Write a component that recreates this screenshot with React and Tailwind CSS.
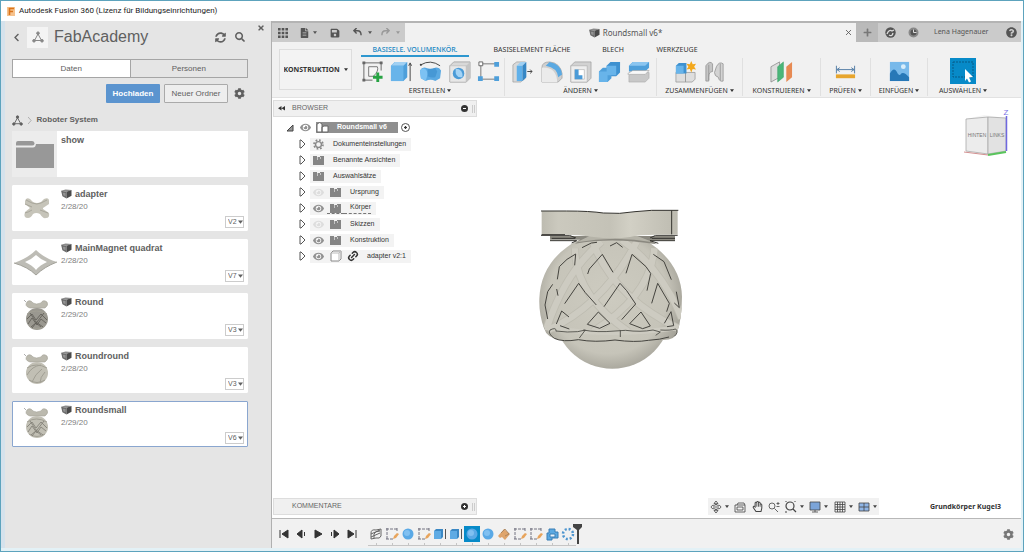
import {
  FaChevronLeft,
  FaCog,
  FaEye,
  FaFileAlt,
  FaPlus,
  FaQuestionCircle,
  FaRegHandPaper,
  FaSave,
  FaSearch,
  FaSyncAlt,
  FaTimes,
} from "react-icons/fa";
import { Link2 } from "lucide-react";

const files = [
  { name: "adapter", date: "2/28/20", version: "V2", thumb: "cross" },
  { name: "MainMagnet quadrat", date: "2/28/20", version: "V7", thumb: "diamond" },
  { name: "Round", date: "2/29/20", version: "V3", thumb: "dark" },
  { name: "Roundround", date: "2/28/20", version: "V3", thumb: "plain" },
  { name: "Roundsmall", date: "2/29/20", version: "V6", thumb: "lattice", active: true },
];

const treeRows = [
  { label: "Dokumenteinstellungen", icons: ["gear"] },
  { label: "Benannte Ansichten", icons: ["folder"] },
  { label: "Auswahlsätze", icons: ["folder"] },
  { label: "Ursprung", icons: ["hidden", "folder"] },
  { label: "Körper", icons: ["eye", "folder"], marked: true },
  { label: "Skizzen", icons: ["hidden", "folder"] },
  { label: "Konstruktion", icons: ["eye", "folder"] },
  { label: "adapter v2:1", icons: ["eye", "part", "link"] },
];

const ribbonTabs = [
  { label: "BASISELE. VOLUMENKÖR.", width: "w-[108px]", active: true },
  { label: "BASISELEMENT FLÄCHE", width: "w-[110px]" },
  { label: "BLECH", width: "w-[36px]" },
  { label: "WERKZEUGE", width: "w-[76px]" },
];

const ribbonGroups = [
  { label: "ERSTELLEN", width: "w-[149px]", icons: ["sketch", "extrude", "revolve", "hole", "pattern"] },
  { label: "ÄNDERN", width: "w-[152px]", icons: ["press", "fillet", "shell", "combine", "split"] },
  { label: "ZUSAMMENFÜGEN", width: "w-[86px]", icons: ["component", "joint"] },
  { label: "KONSTRUIEREN", width: "w-[78px]", icons: ["plane"] },
  { label: "PRÜFEN", width: "w-[50px]", icons: ["measure"] },
  { label: "EINFÜGEN", width: "w-[57px]", icons: ["image"] },
  { label: "AUSWÄHLEN", width: "w-[70px]", icons: ["select"] },
];

const timeline = [
  "coil", "sketch", "sphere", "sketch", "box", "box", "sphereOn",
  "sphere", "plane", "sketch", "sketch", "combine", "pattern",
];

function Caret({ className = "w-[5px]" }) {
  return (
    <svg viewBox="0 0 6 5" className={`${className} shrink-0`} fill="currentColor" aria-hidden="true">
      <path d="M0 .5h6L3 4.5z" />
    </svg>
  );
}

function NetworkIcon({ className }) {
  return (
    <svg viewBox="0 0 12 12" className={className} fill="currentColor" stroke="currentColor" aria-hidden="true">
      <path d="M6 3 2.5 9.5h7z" fill="none" strokeWidth="1" />
      <circle cx="6" cy="2.2" r="1.3" />
      <circle cx="2" cy="9.8" r="1.3" />
      <circle cx="10" cy="9.8" r="1.3" />
    </svg>
  );
}

function CubeIcon({ className = "h-[10px] w-[11px]" }) {
  return (
    <svg viewBox="0 0 12 11" className={`${className} shrink-0`} aria-hidden="true">
      <path d="M0 2 5 .5 11.5 1 6 3z" fill="#8a8a8a" />
      <path d="M0 2 6 3v7.5L1.5 8z" fill="#6c6c6c" />
      <path d="M2 4 5 4.5v3.500L2.500 7z" fill="#949494" />
      <path d="M6 3 11.500 1v6.500L6 10.500z" fill="#4a4a4a" />
    </svg>
  );
}

function FolderIcon({ className }) {
  return (
    <svg viewBox="0 0 38 28" className={className} fill="currentColor" aria-hidden="true">
      <path d="M0 3q0-2 2-2h14q2 0 2.500 2v1q-.5 1.500-2.500 1.500H0zM0 7.500h17q2.500 0 3-3.500h18v24H0z" />
    </svg>
  );
}

function Thumb({ kind }) {
  if (kind === "cross") {
    return (
      <svg viewBox="0 0 44 34" className="w-[44px]" aria-hidden="true">
        <path
          d="M11 10q1-4 5-2l3 3q4 2 8 0l3-3q5-2 5 2v3l-6 4v1l6 4q1 5-3 5-3 1-6-4-4-2-7 0-2 4-5 4-5 0-3-6l5-4-5-4z"
          fill="#c6c4b9"
        />
        <path d="M11 22q4-1 7-3m8 0 8 3M11 13l7 3M12 9l6 3q5 2 9 0l6-3" stroke="#a9a79c" fill="none" />
      </svg>
    );
  }
  if (kind === "diamond") {
    return (
      <svg viewBox="0 0 44 34" className="w-[44px]" aria-hidden="true">
        <path d="M0 18Q14 13 22 5q8 8 21 12-13 5-21 13Q14 22 0 18z" fill="#bdbcb5" />
        <path d="M11 17q7-3 11-7 4 4 11 7-7 3-11 8-4-5-11-8z" fill="#fff" />
        <path d="M0 18q14 4 22 12 8-8 21-13" stroke="#a3a29a" fill="none" />
      </svg>
    );
  }
  return (
    <svg viewBox="0 0 44 34" className="w-[44px]" aria-hidden="true">
      <path d="M13 3q3-3 6 1 3 2 8 0 2-4 6-1 2 3-2 6H16q-6-2-3-6z" fill="#bbb9ae" stroke="#a19f94" strokeWidth=".6" />
      <circle cx="23" cy="20" r="11" fill={kind === "dark" ? "#9a9890" : "#c1bfb4"} />
      <path d="M13 15q9-6 20 0M15 27q8 5 16 0" stroke="#a19f94" fill="none" />
      {kind === "plain" ? (
        <path d="M13 22q5-9 14-10M18 29q3-8 10-13M26 30q0-6 5-11" stroke="#a19f94" fill="none" />
      ) : (
        <path
          d="m13 20 5-5 4 6 5-6 6 6M14 25l4-6 5 7 4-6 5 4M18 29l4-5 5 4M16 14l6 9 7 5M30 14l-7 9-6 5"
          stroke={kind === "dark" ? "#5d5b54" : "#7d7b72"}
          strokeWidth=".8"
          fill="none"
        />
      )}
      <path d="m10 1 2 2" stroke="#999" strokeWidth=".8" />
    </svg>
  );
}

const ribbonArt = {
  sketch: (
    <>
      <path d="M2 3h20M3 2v20M2 21h10M21 2v9" stroke="#666" fill="none" />
      <path d="M1.500 1.500h3v3h-3zM19.500 1.500h3v3h-3zM1.500 19.500h3v3h-3z" fill="#666" />
      <path d="M8 7v10h5q6-6 4-10z" fill="#f6f6f6" stroke="#777" />
      <path d="M17.500 13v10M12.500 18h10" stroke="#27a343" strokeWidth="3" />
    </>
  ),
  extrude: (
    <>
      <path d="M1 6 5 2h13v16l-4 4H1z" fill="#4e9fda" />
      <path d="M1 6 5 2h13l-4 4z" fill="#a0d0f3" />
      <path d="M1 6h13v16H1z" fill="#68b4ea" />
      <path d="M21 22V4m-1.500 2L21 3l1.500 3" stroke="#444" fill="none" />
    </>
  ),
  revolve: (
    <>
      <path d="M2 5q10-6 20 1" stroke="#444" fill="none" />
      <circle cx="2" cy="5" r="1.200" fill="#444" />
      <path d="M1 11q2-4 6-3 5 2 10 0 4-1 6 3l-1 8-5 3q-5-3-10 0l-5-3z" fill="#5aa9e2" />
      <path d="M1 11q2-3 5-2 3 2 3 6l-2 7-5-3z" fill="#7cc2f3" />
      <path d="M9 9q4 1 8-1l2 4-2 6q-4 1-8-1z" fill="#4698d5" />
    </>
  ),
  hole: (
    <>
      <path d="M2 6 6 2h17v17l-4 4H2z" fill="#d8d8d8" stroke="#aaa" />
      <path d="M19 6v17l4-4V2z" fill="#c4c4c4" />
      <path d="M2 6h17v17H2z" fill="#e7e7e7" stroke="#b5b5b5" strokeWidth=".6" />
      <circle cx="11" cy="14" r="6" fill="#4b9bd7" />
      <path d="M8 9q8 0 7 9-8 1-7-9z" fill="#a4d3f5" />
    </>
  ),
  pattern: (
    <>
      <path d="M4 4h16M4 5v15h15" stroke="#777" fill="none" />
      <path d="M2 2h4v4H2z" fill="#fff" stroke="#666" />
      <path d="M18 2h5v5h-5zM18 17h5v5h-5zM1 17h5v5H1z" fill="#4e9fda" />
    </>
  ),
  press: (
    <>
      <path d="M2 5 6 2h9v17l-5 4H2z" fill="#d9d9d9" stroke="#999" strokeWidth=".7" />
      <path d="m6 6 4-4h6l-4 4z" fill="#a0d0f3" />
      <path d="M6 6h6v16H6z" fill="#5fb0ea" />
      <path d="m12 6 4-4v16l-4 4z" fill="#3687c5" />
      <path d="M17 12h5m-2-2 2 2-2 2" stroke="#444" fill="none" />
    </>
  ),
  fillet: (
    <>
      <path d="M2 8q0-6 8-6 11 1 13 12v5l-4 4H2z" fill="#cfcfcf" stroke="#999" strokeWidth=".7" />
      <path d="M10 2q12 2 13 13l-4 3Q18 8 6 6z" fill="#5aa9e2" />
      <path d="M2 8q15-1 16 15H2z" fill="#ebebeb" />
    </>
  ),
  shell: (
    <>
      <path d="M2 6 6 2h17v17l-4 4H2z" fill="#d2d2d2" stroke="#999" strokeWidth=".7" />
      <path d="M2 6h17v17H2z" fill="#eee" stroke="#aaa" strokeWidth=".6" />
      <path d="M6 10h10v10H6z" fill="#fff" stroke="#aaa" strokeWidth=".6" />
      <path d="M6 10v10h8v-4h-4v-6z" fill="#4b9bd7" />
    </>
  ),
  combine: (
    <>
      <path d="M9 6 13 2h10v11l-4 4H9z" fill="#3e91d0" />
      <path d="M1 12l4-4h9v11l-4 4H1z" fill="#4e9fda" />
      <path d="M9 6h10v10h-9v7H1V12h8z" fill="#68b4ea" />
    </>
  ),
  split: (
    <>
      <path d="M2 6 6 2h17v6l-4 4H2z" fill="#4e9fda" />
      <path d="m2 6 4-4h17l-4 4z" fill="#8ac5f0" />
      <path d="m2 16 4-3h17v6l-4 4H2z" fill="#c8c8c8" stroke="#aaa" strokeWidth=".6" />
      <path d="m1 14 5-3h17l-4 4H1z" fill="#f8f8f8" stroke="#999" strokeWidth=".6" />
    </>
  ),
  component: (
    <>
      <path d="M2 13h10v10H2zM12 13h10v7l-3 3h-7z" fill="#dedede" stroke="#999" strokeWidth=".8" />
      <path d="m2 6 3-3h8v11H2z" fill="#3e91d0" />
      <path d="M2 6h8v8H2z" fill="#68b4ea" />
      <path d="m18 1 1.500 3.500L23 4l-2 3 2 3-3.500-.5L18 13l-1.500-3.500L13 10l2-3-2-3 3.500.5z" fill="#f3a81c" />
    </>
  ),
  joint: (
    <>
      <path d="M3 6q4-6 7-2v8q-4 0-4 6v4H3z" fill="#c5c5c5" stroke="#909090" strokeWidth=".8" />
      <path d="M14 7q3-6 7-3v18q-4 1-5-4-4-1-4-5z" fill="#d3d3d3" stroke="#909090" strokeWidth=".8" />
      <path d="M18 4v17M6 5v16" stroke="#909090" strokeWidth=".8" />
    </>
  ),
  plane: (
    <>
      <path d="m1 7 9-5v16l-9 5z" fill="#ddd" stroke="#888" strokeWidth=".8" />
      <path d="m8 7 6-5v16l-6 5z" fill="#4bb679" stroke="#2e9b5d" strokeWidth=".5" />
      <path d="m17 7 6-5v16l-6 5z" fill="#e78a53" />
    </>
  ),
  measure: (
    <>
      <path d="M2.500 6v8M21.500 6v8M3 10h18M6 8l-3 2 3 2M18 8l3 2-3 2" stroke="#557da5" fill="none" />
      <path d="M2 15h20v4H2z" fill="#e7a52d" />
    </>
  ),
  image: (
    <>
      <path d="M2 2h20v20H2z" fill="#78b9ea" />
      <path d="M2 14q4-7 7-2 2 5 4 3 3-4 9 3v4H2z" fill="#2778b7" />
      <circle cx="16" cy="7" r="2.500" fill="#d9eefb" />
    </>
  ),
};

function RibbonIcon({ name }) {
  if (name === "select") {
    return (
      <svg viewBox="0 0 26 26" className="w-[26px]" aria-hidden="true">
        <path d="M0 0h26v26H0z" fill="#078ac8" />
        <path d="M3 4h20v15H3z" stroke="#075b87" strokeDasharray="2 1" fill="none" />
        <path d="m15 11 8 8-4 .5 2 4-2 1-2-4-2 2.500z" fill="#fff" />
      </svg>
    );
  }
  return (
    <svg viewBox="0 0 24 24" className="w-[23px]" aria-hidden="true">
      {ribbonArt[name]}
    </svg>
  );
}

function TimelineIcon({ name }) {
  return (
    <svg viewBox="0 0 16 16" className="w-[16px]" aria-hidden="true">
      {name === "sphereOn" && <path d="M0 0h16v16H0z" fill="#078ac8" />}
      {name.startsWith("sphere") && (
        <>
          <circle cx="8" cy="8" r="5.500" fill="#5aa9e6" />
          <circle cx="7" cy="7" r="3" fill="#80c0f1" />
        </>
      )}
      {name === "coil" && (
        <path d="M3 7q0-4 5-3l5-1v7q-1 3-5 2l-5 1zM3 8l9-4M3 11l9-4M6 12V8q1-3 6-3" stroke="#666" fill="none" />
      )}
      {name === "sketch" && (
        <>
          <path d="M2 3h12M3 2v12M2 13h7M13 2v4" stroke="#667" strokeWidth=".9" strokeDasharray="3 1" fill="none" />
          <path d="m9 13 1-3 3-3 2 1-3 4z" fill="#e8a45c" />
        </>
      )}
      {name === "box" && (
        <>
          <path d="m2 5 2-2h7v8l-2 2H2z" fill="#3b88c4" />
          <path d="M2 5h7v8H2z" fill="#5fabe4" />
          <path d="M13.500 13V3" stroke="#555" />
        </>
      )}
      {name === "plane" && (
        <>
          <path d="m2 10 6-7 6 5-5 6-3-3-2 1z" fill="#dfa46b" />
          <path d="m5 7 4-4 4 5-4 2" stroke="#a07c58" strokeWidth=".8" fill="none" />
        </>
      )}
      {name === "combine" && (
        <>
          <path d="M5 3h6v3h3v6H8v2H3V7h2z" fill="#5aa9e2" stroke="#3b7fb5" />
          <path d="M6 8h5v3H6z" fill="#eaf4fb" stroke="#3b7fb5" />
        </>
      )}
      {name === "pattern" && (
        <circle cx="8" cy="8" r="5" stroke="#4f96cf" strokeWidth="2.500" strokeDasharray="2 1.930" fill="none" />
      )}
    </svg>
  );
}

function Sidebar() {
  return (
    <aside className="flex w-[271px] shrink-0 flex-col border-r border-l-4 border-r-[#b0b0b0] border-l-[#d5e2ec] bg-[#e5e5e5] pl-[7px] text-[#606060]">
      <div className="flex h-[32px] items-start">
        <div className="flex h-[32px] flex-1 items-center pr-[12px]">
          <button aria-label="Zurück" className="w-[15px]">
            <FaChevronLeft className="size-[9px]" />
          </button>
          <span className="flex size-[21px] items-center justify-center bg-[#f4f4f4]">
            <NetworkIcon className="size-[12px] text-[#888]" />
          </span>
          <h1 className="ml-[6px] text-[16px] leading-[20px]">FabAcademy</h1>
          <button aria-label="Aktualisieren" className="ml-auto">
            <FaSyncAlt className="size-[11px]" />
          </button>
          <button aria-label="Suchen" className="ml-[9px]">
            <FaSearch className="size-[10px]" />
          </button>
        </div>
        <button aria-label="Bereich schließen" className="mt-[3px] mr-[6px]">
          <FaTimes className="size-[8px]" />
        </button>
      </div>

      <div className="mr-[23px] flex flex-1 flex-col">
        <div role="tablist" className="mt-[6px] flex h-[19px] border border-[#a5a5a5] text-[8px]">
          <button role="tab" aria-selected="true" className="flex-1 bg-white">Daten</button>
          <button role="tab" aria-selected="false" className="flex-1 border-l border-[#a5a5a5]">Personen</button>
        </div>
        <div className="mt-[6px] flex h-[19px] items-center justify-end gap-[4px] text-[8px]">
          <button className="h-[19px] w-[54px] rounded-[1px] bg-[#5b94cf] font-bold text-white">Hochladen</button>
          <button className="h-[19px] w-[64px] rounded-[1px] border border-[#aaa] bg-[#eee]">Neuer Ordner</button>
          <button aria-label="Einstellungen" className="ml-[2px] mr-[3px]">
            <FaCog className="size-[11px]" />
          </button>
        </div>
        <nav className="mt-[10px] flex h-[14px] items-center gap-[5px] text-[8px] font-bold">
          <NetworkIcon className="size-[11px]" />
          <svg viewBox="0 0 4 10" className="h-[9px] text-[#aaa]" stroke="currentColor" fill="none" aria-hidden="true">
            <path d="m0 1 3.500 4L0 9" />
          </svg>
          <a href="#roboter">Roboter System</a>
        </nav>

        <ul className="mt-[4px] flex flex-col gap-[8px]">
          <li className="flex h-[46px]">
            <span className="flex w-[45px] items-center justify-center bg-[#ececec]">
              <FolderIcon className="w-[38px] text-[#989898]" />
            </span>
            <a href="#show" className="flex-1 bg-white pl-[4px] pt-[3px] text-[9px] leading-[12px] font-bold">show</a>
          </li>
          {files.map((file) => (
            <li
              key={file.name}
              className={`flex h-[46px] rounded-[1px] border bg-white ${file.active ? "border-[#8aa6cf]" : "border-white"}`}
            >
              <span className="flex w-[45px] items-center justify-center">
                <Thumb kind={file.thumb} />
              </span>
              <div className="flex-1 pt-[2px] pl-[3px]">
                <a href={`#${file.name}`} className="flex items-center gap-[3px] text-[9px] leading-[12px] font-bold">
                  <CubeIcon />
                  {file.name}
                </a>
                <p className="mt-[2px] text-[8px] leading-[10px] text-[#808080]">{file.date}</p>
              </div>
              <label className="mr-[3px] mb-[2px] flex h-[12px] w-[19px] items-center self-end border border-[#ccc] pl-[2px]">
                <select aria-label={`Version ${file.name}`} className="w-[11px] appearance-none text-[7px]">
                  <option>{file.version}</option>
                </select>
                <Caret className="w-[5px]" />
              </label>
            </li>
          ))}
        </ul>
      </div>
    </aside>
  );
}

function TabBar() {
  return (
    <header className="flex h-[21px] items-stretch border-t-2 border-[#b4b4b4] bg-[#cbcbcb] text-[#555]">
      <div className="flex w-[133px] items-center pl-[6px]">
        <button aria-label="Datengruppe" className="w-[22px]">
          <svg viewBox="0 0 10 10" className="w-[10px]" fill="currentColor" aria-hidden="true">
            <path d="M0 0h2.600v2.600H0zM3.700 0h2.600v2.600H3.700zM7.400 0H10v2.600H7.400zM0 3.700h2.600v2.600H0zM3.700 3.700h2.600v2.600H3.700zM7.400 3.700H10v2.600H7.400zM0 7.400h2.600V10H0zM3.700 7.400h2.600V10H3.700zM7.400 7.400H10V10H7.400z" />
          </svg>
        </button>
        <button aria-label="Datei" className="flex w-[30px] items-center gap-[4px]">
          <FaFileAlt className="h-[10px] w-[9px]" />
          <Caret className="w-[4px]" />
        </button>
        <button aria-label="Speichern" className="w-[23px]">
          <FaSave className="size-[10px]" />
        </button>
        <button aria-label="Rückgängig" className="flex w-[28px] items-center gap-[6px]">
          <svg viewBox="0 0 10 9" className="w-[9px]" stroke="currentColor" strokeWidth="1.600" fill="none" aria-hidden="true">
            <path d="M4 0 1 3l3 3M1 3h4q4 0 4 5" />
          </svg>
          <Caret className="w-[4px]" />
        </button>
        <button aria-label="Wiederholen" className="flex items-center gap-[6px] text-[#999]">
          <svg viewBox="0 0 10 9" className="w-[9px]" stroke="currentColor" strokeWidth="1.600" fill="none" aria-hidden="true">
            <path d="m6 0 3 3-3 3M9 3H5Q1 3 1 8" />
          </svg>
          <Caret className="w-[4px]" />
        </button>
      </div>
      <div className="flex flex-1 items-center bg-[#f1f1f1]">
        <span className="flex flex-1 items-center justify-center gap-[3px] text-[8px]">
          <CubeIcon />
          Roundsmall v6*
        </span>
        <button aria-label="Tab schließen" className="mr-[5px]">
          <svg viewBox="0 0 6 6" className="w-[5px]" stroke="currentColor" aria-hidden="true">
            <path d="m0 0 6 6M6 0 0 6" />
          </svg>
        </button>
      </div>
      <button aria-label="Neuer Tab" className="flex w-[22px] items-center justify-center bg-[#bababa]">
        <FaPlus className="size-[9px] text-[#777]" />
      </button>
      <div className="flex w-[143px] items-center pl-[7px] text-[7px]">
        <button aria-label="Erweiterungen" className="w-[23px]">
          <svg viewBox="0 0 11 11" className="w-[11px]" aria-hidden="true">
            <circle cx="5.500" cy="5.500" r="5.200" fill="#555" />
            <path d="M2 7q2-5 5-3l2-1M4 8q3 2 4-2" stroke="#ddd" strokeWidth="1.300" fill="none" />
          </svg>
        </button>
        <button aria-label="Auftragsstatus" className="w-[26px]">
          <svg viewBox="0 0 11 11" className="w-[11px]" aria-hidden="true">
            <circle cx="5.500" cy="5.500" r="4" fill="#555" stroke="#888" strokeWidth="2" />
            <path d="M5.500 2.500v3h3" stroke="#ddd" fill="none" />
          </svg>
        </button>
        <button>Lena Hagenauer</button>
        <button aria-label="Hilfe" className="ml-auto mr-[4px]">
          <FaQuestionCircle className="size-[11px]" />
        </button>
      </div>
    </header>
  );
}

function Ribbon() {
  return (
    <section className="flex h-[56px] border-b border-[#e2e2e2] bg-[#f1f1f1] text-[7px] leading-[10px] text-[#333]">
      <label className="my-[7px] ml-[7px] flex w-[73px] items-center justify-center gap-[3px] border border-[#ddd] bg-[#f3f3f3]">
        <select aria-label="Arbeitsbereich" className="appearance-none font-bold">
          <option>KONSTRUKTION</option>
        </select>
        <Caret className="w-[4px]" />
      </label>
      <div className="ml-[4px] flex flex-1 flex-col">
        <div role="tablist" className="flex h-[15px] items-end gap-[8px] pl-[5px]">
          {ribbonTabs.map((tab) => (
            <button
              key={tab.label}
              role="tab"
              aria-selected={Boolean(tab.active)}
              className={`h-[12px] border-b-2 whitespace-nowrap ${tab.width} ${
                tab.active ? "border-[#2e97cf] font-medium text-[#1987c3]" : "border-transparent"
              }`}
            >
              {tab.label}
            </button>
          ))}
        </div>
        <div className="flex pt-[1px]">
          {ribbonGroups.map((group) => (
            <div key={group.label} className={`flex flex-col items-center border-r border-[#e0e0e0] last:border-r-0 ${group.width}`}>
              <div className="flex h-[26px] items-center">
                {group.icons.map((icon) => (
                  <button key={icon} aria-label={icon} className="flex w-[29px] justify-center">
                    <RibbonIcon name={icon} />
                  </button>
                ))}
              </div>
              <button className="mt-[2px] flex items-center gap-[2px] whitespace-nowrap">
                {group.label}
                <Caret className="w-[4px]" />
              </button>
            </div>
          ))}
        </div>
      </div>
    </section>
  );
}

function TreeIcon({ name }) {
  if (name === "gear") {
    return (
      <svg viewBox="0 0 12 12" className="w-[11px]" fill="none" stroke="#888" aria-hidden="true">
        <circle cx="6" cy="6" r="3.200" strokeWidth="1.500" />
        <circle cx="6" cy="6" r="4.900" strokeWidth="1.800" strokeDasharray="1.900 1.950" />
      </svg>
    );
  }
  if (name === "folder") {
    return (
      <svg viewBox="0 0 12 10" className="w-[12px]" fill="#858585" aria-hidden="true">
        <path d="M0 1h4v1h3V1h4v9H0z" />
        <path d="M4.500 2v3M7.500 2v2" stroke="#c5c5c5" />
      </svg>
    );
  }
  if (name === "link") return <Link2 className="size-[12px] -rotate-45 text-[#333]" strokeWidth={3} />;
  if (name === "part") {
    return (
      <svg viewBox="0 0 12 12" className="w-[12px]" fill="#fff" stroke="#888" aria-hidden="true">
        <path d="m1 3 2-2h8v8l-2 2H1z" />
        <path d="M1 3h8v8M9 3l2-2" stroke="#bbb" fill="none" />
      </svg>
    );
  }
  return <FaEye className={`size-[11px] ${name === "hidden" ? "text-[#ddd]" : "text-[#909090]"}`} />;
}

function PanelDot({ path }) {
  return (
    <button aria-label="Bereich umschalten" className="mr-[1px] ml-auto flex items-center gap-[4px]">
      <svg viewBox="0 0 7 7" className="w-[7px]" aria-hidden="true">
        <circle cx="3.500" cy="3.500" r="3.500" fill="#333" />
        <path d={path} stroke="#fff" />
      </svg>
      <span className="h-[8px] w-[3px] border-x border-[#ccc]" />
    </button>
  );
}

function BrowserPanel() {
  return (
    <section className="flex w-[204px] flex-col text-[7px] text-[#333]">
      <div className="flex h-[17px] items-center border border-[#ddd] bg-[#f0f0f0] pl-[4px]">
        <button aria-label="Browser einklappen" className="w-[14px]">
          <svg viewBox="0 0 8 5" className="w-[7px]" fill="#333" aria-hidden="true">
            <path d="M4 0v5L0 2.500zM8 0v5L4 2.500z" />
          </svg>
        </button>
        <h2 className="text-[#666]">BROWSER</h2>
        <PanelDot path="M2 3.500h3" />
      </div>
      <ul className="mt-[2px]">
        <li className="flex h-[17px] items-center pl-[13px]">
          <svg viewBox="0 0 8 8" className="w-[8px]" fill="#999" stroke="#444" aria-hidden="true">
            <path d="M7 1v6H1z" />
          </svg>
          <span className="ml-[6px] w-[16px]">
            <FaEye className="size-[11px] text-[#909090]" />
          </span>
          <span className="flex h-[11px] w-[82px] items-center bg-[#8f8f8f] font-bold text-white">
            <svg viewBox="0 0 14 11" className="w-[14px]" fill="#fff" stroke="#666" aria-hidden="true">
              <path d="M1 2q3-3 5 0v8H1zM6 5l2-1h4v6H6z" />
            </svg>
            <span className="ml-[7px]">Roundsmall v6</span>
          </span>
          <input
            type="radio"
            defaultChecked
            aria-label="Roundsmall v6 aktivieren"
            className="ml-[3px] size-[9px] appearance-none rounded-full border border-[#555] bg-[radial-gradient(#333_20%,#fff_30%)]"
          />
        </li>
        {treeRows.map((row) => (
          <li key={row.label} className="flex h-[16px] items-center pl-[26px]">
            <button aria-label={`${row.label} öffnen`} className="w-[11px]">
              <svg viewBox="0 0 7 10" className="w-[7px]" fill="#fff" stroke="#555" aria-hidden="true">
                <path d="M1 1h1l4 4-4 4H1z" />
              </svg>
            </button>
            <span className="flex h-[13px] items-center bg-[#f3f3f3] pr-[5px]">
              {row.icons.map((icon) => (
                <span
                  key={icon}
                  className={`flex h-[11px] w-[17px] items-center justify-center ${
                    row.marked && icon === "folder" ? "border-b border-dashed border-[#777]" : ""
                  }`}
                >
                  <TreeIcon name={icon} />
                </span>
              ))}
              <span
                className={`flex h-[11px] items-center pl-[6px] ${row.marked ? "border-b border-dashed border-[#777]" : ""}`}
              >
                {row.label}
              </span>
            </span>
          </li>
        ))}
      </ul>
      <div className="mt-auto flex h-[17px] items-center border border-[#ddd] bg-[#f0f0f0] pl-[18px]">
        <h2 className="text-[#666]">KOMMENTARE</h2>
        <PanelDot path="M2 3.500h3M3.500 2v3" />
      </div>
    </section>
  );
}

function Model() {
  const ribs =
    "M230 140Q120 230 65 400M290 135q120 85 180 235M205 145q60 160 255 255M335 140Q235 330 70 405M150 160q0 140 160 250M388 160q-10 140-185 250";
  return (
    <svg viewBox="0 0 525 555" className="w-[175px]" role="img" aria-label="Roundsmall">
      <defs>
        <radialGradient id="body" gradientUnits="userSpaceOnUse" cx="250" cy="300" r="235">
          <stop offset="0" stopColor="#cdcbc0" />
          <stop offset=".75" stopColor="#c6c4b9" />
          <stop offset="1" stopColor="#a3a197" />
        </radialGradient>
        <linearGradient id="plate">
          <stop offset="0" stopColor="#bdbbb0" />
          <stop offset=".12" stopColor="#cbc9be" />
          <stop offset=".5" stopColor="#c4c2b7" />
          <stop offset=".65" stopColor="#d2d0c5" />
          <stop offset="1" stopColor="#bdbbb0" />
        </linearGradient>
        <clipPath id="shell">
          <path d="M160 135h200q108 65 111 170-1 70-14 105-6 26-45 25-150 12-305 0-42-5-50-35-16-45-14-90 5-115 117-175z" />
        </clipPath>
      </defs>
      <circle cx="262" cy="344" r="177" fill="url(#body)" />
      <g clipPath="url(#shell)">
        <path d="M30 120h455v330H30z" fill="url(#body)" />
        <path d={ribs} stroke="#bebcb1" strokeWidth="24" fill="none" />
        <path d={ribs} stroke="#cdcbc1" strokeWidth="19" fill="none" />
        <path d="M60 398q200 30 400 0" stroke="#cdcbc1" strokeWidth="14" fill="none" />
      </g>
      <g stroke="#45443f" strokeWidth="3" fill="none" strokeLinejoin="round">
        <path d="m188 237 5-15 39-44 32 54M303 235l18-57 42 37 14 20-11 52M119 326l42-61 20 28 33 37M237 335l48-70 20 22 27 40-42 47M380 325l18-60 35 60-8 25M187 388l33-37 35 34-31 15zM314 386l34-35 28 42-23 8zM94 387l16-39 22 18M105 392l28 10M418 385l20-35 8 42-20 3M60 330l8-40 15-22M60 330l8 42M95 282l4 20M97 253l6-38 23-22 26-16-3 34M385 178l32 22 22 54M255 153l20-10 18 14M171 158l28-14 17-2M454 290l9 48-15-14" />
        <path d="M88 430q-20-14-13-25 20-10 18 4M93 408q35 5 65 2l23-5-18 24M175 405q40 8 95 3l32-2M286 406v20M302 406q45 6 82-1l22 6-14 10M406 405q30 2 46-3 10 10-4 22" strokeWidth="2.500" />
        <path d="M88 430q25 12 72 4 50 9 110 1 60 8 100 1 36-2 62-10" />
      </g>
      <path d="M75 123h375v13H375l20 12q-130-22-245-2l15-12H75z" fill="#8b8980" />
      <path d="m155 142 40-20h140l50 20q-115-22-230 0z" fill="#b5b3a8" />
      <path d="M75 137h80l-15 7M450 137h-75l25 8M48 121h85l20 8M375 129l17-8h66M80 130h70M380 130h70" stroke="#33322e" strokeWidth="3" fill="none" />
      <path d="M50 48h75q70 0 110 6 50 4 95-4l50-4h78v73h-63q-55 0-80 7-50 8-108 0-50-8-100-7H50z" fill="url(#plate)" />
      <path d="M48 48h77q70 0 110 6 50 4 95-4l50-4h80M440 46v72M50 119h70" stroke="#33322e" strokeWidth="3" fill="none" />
    </svg>
  );
}

function ViewCube() {
  return (
    <svg viewBox="0 0 56 54" className="w-[56px]" role="img" aria-label="ViewCube">
      <path d="m6 13 18-4 22 3-18 4z" fill="#f5f5f5" />
      <path d="m6 13 22-2v37L6 45z" fill="#ececec" stroke="#aaa" strokeWidth=".8" />
      <path d="m28 11 18 1v33l-18 3z" fill="#e2e2e2" stroke="#aaa" strokeWidth=".8" />
      <path d="m28 49 18-3" stroke="#59c45c" strokeWidth="2" />
      <path d="m4 46 24 3" stroke="#d28f8f" />
      <path d="M46.500 45V10" stroke="#6f68e0" strokeWidth="1.500" />
      <text x="17" y="31" fontSize="5" textAnchor="middle" fill="#777">HINTEN</text>
      <text x="37" y="31" fontSize="5" textAnchor="middle" fill="#777">LINKS</text>
      <text x="46" y="9" fontSize="8" textAnchor="middle" fill="#7a72e5">Z</text>
    </svg>
  );
}

const navTools = [
  {
    name: "Orbit",
    caret: true,
    art: <path d="M6 0 4 2.500h1.500V4Q1 4 1 6t4.500 2v1.500H4L6 12l2-2.500H6.500V8Q11 8 11 6T6.500 4V2.500H8zM3 6h6" />,
  },
  { name: "Ansicht von", art: <path d="M1 4h10v7H1zM3 4l1-2h6l1 2M3 6h6v3H3z" /> },
  { name: "Pan", hand: true },
  { name: "Zoom", art: <path d="M7 5a3 3 0 1 1-6 0 3 3 0 0 1 6 0zM6.500 7.500 10 11M8.500 2.500h3M10 1v3M8.500 5.500h3" /> },
  { name: "Fenster-Zoom", caret: true, art: <path d="M9 5a4 4 0 1 1-8 0 4 4 0 0 1 8 0zM8 8l3 3M0 0h2M9 0h2M0 11h2" strokeWidth="1.200" /> },
  { name: "Anzeige", caret: true, art: <path d="M1 1h10v8H1zM3 11h6M6 9v2" fill="#7ba4d8" /> },
  { name: "Raster", caret: true, art: <path d="M1 1h10v10H1zM3.500 1v10M6 1v10M8.500 1v10M1 3.500h10M1 6h10M1 8.500h10" /> },
  { name: "Ansichtsfenster", caret: true, art: <path d="M1 2h10v8H1zM6 2v8M1 6h10" fill="#8fb5e6" /> },
];

function NavBar() {
  return (
    <div className="flex h-[17px] items-center justify-between bg-[#f1f1f1] px-[2px] text-[#444]">
      {navTools.map((tool) => (
        <button key={tool.name} aria-label={tool.name} className="flex items-center gap-[3px]">
          {tool.hand ? (
            <FaRegHandPaper className="size-[11px]" />
          ) : (
            <svg viewBox="0 0 12 12" className="w-[12px]" fill="none" stroke="currentColor" strokeWidth=".8" aria-hidden="true">
              {tool.art}
            </svg>
          )}
          {tool.caret && <Caret className="w-[4px]" />}
        </button>
      ))}
    </div>
  );
}

function Timeline() {
  const controls = [
    { name: "Anfang", path: "M2 2v8M10 2v8L4 6z" },
    { name: "Zurück", path: "M7 2v8L2 6zM9.500 4v4" },
    { name: "Wiedergabe", path: "M3 2v8l7-4z" },
    { name: "Vor", path: "M5 2v8l5-4zM2.500 4v4" },
    { name: "Ende", path: "M10 2v8M2 2v8l6-4z" },
  ];
  return (
    <footer className="flex h-[30px] items-center border-t border-[#b8b8b8] bg-[#f1f1f1] pt-[1px] pl-[6px]">
      <div className="flex gap-[5px]">
        {controls.map((control) => (
          <button key={control.name} aria-label={control.name}>
            <svg viewBox="0 0 12 12" className="w-[12px]" fill="#333" stroke="#333" aria-hidden="true">
              <path d={control.path} />
            </svg>
          </button>
        ))}
      </div>
      <ol className="ml-[10px] flex pt-[4px]">
        {timeline.map((step, index) => (
          <li key={index} className="flex w-[16px] flex-col items-center">
            <TimelineIcon name={step} />
            <span className="mt-[1px] h-[2px] w-px bg-[#c5c5c5]" />
            <span className="h-px w-full bg-[#c5c5c5]" />
          </li>
        ))}
      </ol>
      <svg viewBox="0 0 9 22" className="-ml-[3px] h-[22px]" fill="#444" aria-hidden="true">
        <path d="M0 1h9v3L6 7v14H4V7L0 4z" />
      </svg>
      <button aria-label="Zeitachseneinstellungen" className="mr-[7px] ml-auto">
        <FaCog className="size-[11px] text-[#777]" />
      </button>
    </footer>
  );
}

export default function App() {
  return (
    <div className="flex min-h-screen flex-col border border-[#5da3bd] bg-[#e3f1f6] font-['Liberation_Sans',Arial,sans-serif]">
      <div className="flex h-[20px] items-center gap-[4px] bg-white pl-[6px] font-[Roboto,sans-serif] text-[8px] text-[#222]">
        <svg viewBox="0 0 8 9" className="w-[8px]" aria-hidden="true">
          <path d="M0 0h8v9H0z" fill="#f6c28d" />
          <path d="M2.500 8V1.500H7M2.500 4.500h3.500" stroke="#d9731a" strokeWidth="1.600" fill="none" />
        </svg>
        Autodesk Fusion 360 (Lizenz für Bildungseinrichtungen)
      </div>
      <div className="mb-[3px] flex flex-1">
        <Sidebar />
        <main className="mr-[2px] flex min-w-0 flex-1 flex-col">
          <div className="font-['Noto_Sans',sans-serif]">
            <TabBar />
            <Ribbon />
          </div>
          <div className="relative flex flex-1 bg-white pt-[2px] pb-[3px] pl-[1px]">
            <BrowserPanel />
            <div className="absolute top-[97px] left-[253px]">
              <Model />
            </div>
            <div className="absolute top-[8px] right-[5px]">
              <ViewCube />
            </div>
            <div className="absolute right-[142px] bottom-[3px] w-[171px]">
              <NavBar />
            </div>
            <p className="absolute right-[20px] bottom-[6px] font-['Noto_Sans',sans-serif] text-[7px] leading-[10px] font-bold text-[#333]">
              Grundkörper Kugel3
            </p>
          </div>
          <Timeline />
        </main>
      </div>
    </div>
  );
}
